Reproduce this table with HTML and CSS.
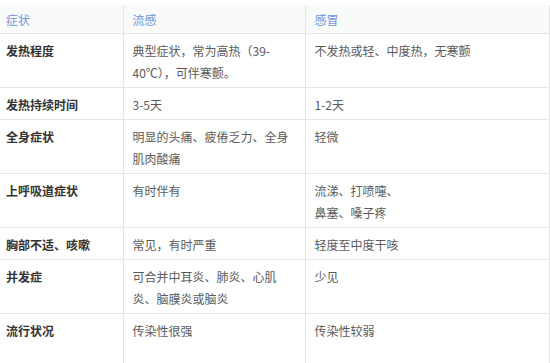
FILE: index.html
```html
<!DOCTYPE html>
<html lang="zh">
<head>
<meta charset="utf-8">
<link rel="stylesheet" href="styles.css">
</head>
<body>
<table class="cmp">
  <colgroup>
    <col class="c1"><col class="c2"><col class="c3">
  </colgroup>
  <thead>
    <tr><th>症状</th><th>流感</th><th>感冒</th></tr>
  </thead>
  <tbody>
    <tr><td class="lab">发热程度</td><td class="just">典型症状，常为高热（39-40℃），可伴寒颤。</td><td>不发热或轻、中度热，无寒颤</td></tr>
    <tr><td class="lab">发热持续时间</td><td>3-5天</td><td>1-2天</td></tr>
    <tr><td class="lab">全身症状</td><td>明显的头痛、疲倦乏力、全身肌肉酸痛</td><td>轻微</td></tr>
    <tr><td class="lab">上呼吸道症状</td><td>有时伴有</td><td>流涕、打喷嚏、<br>鼻塞、嗓子疼</td></tr>
    <tr><td class="lab">胸部不适、咳嗽</td><td>常见，有时严重</td><td>轻度至中度干咳</td></tr>
    <tr><td class="lab">并发症</td><td class="just">可合并中耳炎、肺炎、心肌炎、脑膜炎或脑炎</td><td>少见</td></tr>
    <tr class="last"><td class="lab">流行状况</td><td>传染性很强</td><td>传染性较弱</td></tr>
  </tbody>
</table>
</body>
</html>
```

FILE: styles.css
```css
html, body {
  margin: 0;
  padding: 0;
  background: #ffffff;
}
body {
  font-family: "Noto Sans CJK SC", "Noto Sans", sans-serif;
  font-size: 12px;
  color: #5a5a5a;
}
.cmp {
  margin-top: 5px;
  width: 549px;
  border-collapse: collapse;
  table-layout: fixed;
}
.c1 { width: 123px; }
.c2 { width: 182px; }
.c3 { width: 244px; }
.cmp th, .cmp td {
  text-align: left;
  vertical-align: top;
  line-height: 22px;
  border: 1px solid #e6e6e6;
}
.cmp th:first-child, .cmp td:first-child {
  border-left: none;
}
.cmp th {
  font-weight: normal;
  color: #7296de;
  background: #f9fafa;
  padding: 4px 8px 2px 9px;
  border-top: none;
}
.cmp td {
  padding: 6px 8px 3px 9px;
}
.cmp th:first-child, .cmp td:first-child {
  padding-left: 6px;
}
.cmp td:nth-child(2) {
  padding-right: 10px;
}
.lab {
  font-weight: bold;
  color: #333333;
}
.just {
  text-align: justify;
  text-justify: inter-character;
}
.last td {
  height: 60px;
}
```
